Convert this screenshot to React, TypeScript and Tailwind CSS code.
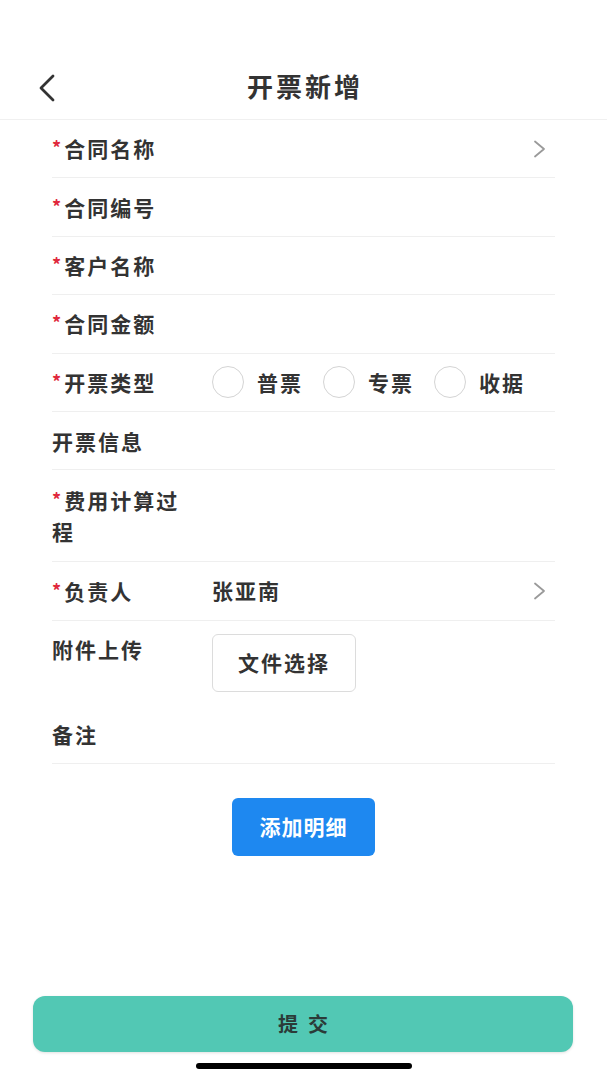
import React from 'react';

const FONT = '"Noto Sans CJK SC", "Noto Sans", sans-serif';

function ChevronRight() {
  return (
    <svg width="14" height="18" viewBox="0 0 14 18" fill="none" className="ml-auto mr-[8px]">
      <path d="M2 1.5 L11 9 L2 16.5" stroke="#9a9a9a" strokeWidth="1.8" strokeLinecap="round" strokeLinejoin="round" />
    </svg>
  );
}

function Radio({ label }: { label: string }) {
  return (
    <div className="flex items-center">
      <div className="w-[32px] h-[32px] rounded-full border-[1.5px] border-[#d4d4d4] bg-white" />
      <span className="ml-[13px] mr-[20px]">{label}</span>
    </div>
  );
}

interface RowProps {
  label: string;
  required?: boolean;
  children?: React.ReactNode;
  arrow?: boolean;
  border?: boolean;
  className?: string;
  top?: boolean;
}

function Row({ label, required, children, arrow, border = true, className = 'h-[58.4px]', top }: RowProps) {
  return (
    <div className={`flex ${top ? 'items-start' : 'items-center'} ${border ? 'border-b border-[#efefef]' : ''} ${className}`}>
      <div className="w-[160px] shrink-0">
        <div className="w-[136px] leading-[30px]">
          {required && (
            <span className="text-[#e0283c] text-[18px] tracking-normal mr-[3px] relative -top-[2px]">*</span>
          )}
          {label}
        </div>
      </div>
      {children}
      {arrow && <ChevronRight />}
    </div>
  );
}

export default function App() {
  return (
    <div
      className="w-[607px] h-[1080px] bg-white relative overflow-hidden text-[#333333]"
      style={{ fontFamily: FONT }}
    >
      {/* header */}
      <div className="h-[120px] border-b border-[#f0f0f0] flex items-end pb-[13px] relative">
        <svg width="22" height="28" viewBox="0 0 22 28" fill="none" className="absolute left-[36px] top-[74px]">
          <path d="M17 2 L5 14 L17 26" stroke="#333" strokeWidth="2.8" strokeLinecap="round" strokeLinejoin="round" />
        </svg>
        <div className="w-full text-center text-[26px] font-semibold tracking-[3px] pl-[3px] leading-[40px] text-[#333]">开票新增</div>
      </div>

      {/* form */}
      <div className="mx-[52px] text-[21px] font-semibold tracking-[2px]">
        <Row label="合同名称" required arrow />
        <Row label="合同编号" required />
        <Row label="客户名称" required />
        <Row label="合同金额" required />
        <Row label="开票类型" required>
          <div className="flex items-center">
            <Radio label="普票" />
            <Radio label="专票" />
            <Radio label="收据" />
          </div>
        </Row>
        <Row label="开票信息" />
        <Row label="费用计算过程" required className="py-[15px]" top />
        <Row label="负责人" required arrow>
          <span>张亚南</span>
        </Row>
        <Row label="附件上传" border={false} className="pt-[13px] pb-[14px]" top>
          <button className="w-[144px] h-[58px] border border-[#dcdcdc] rounded-[6px] bg-white flex items-center justify-center text-[21px] tracking-[2px] font-semibold text-[#333]">
            文件选择
          </button>
        </Row>
        <Row label="备注" />
      </div>

      <div className="flex justify-center mt-[34px]">
        <button className="w-[143px] h-[58px] rounded-[6px] bg-[#1e88f0] text-white text-[21px] font-semibold tracking-[1px]">
          添加明细
        </button>
      </div>

      {/* footer */}
      <div className="absolute left-[33px] right-[34px] top-[996px] h-[56px] rounded-[12px] bg-[#52c8b4] shadow-[0_1px_3px_rgba(0,0,0,0.12)] flex items-center justify-center text-[20px] font-semibold text-[#2b3b38] tracking-[10px] pl-[10px]">
        提交
      </div>
      <div className="absolute left-[196px] top-[1063px] w-[216px] h-[6px] rounded-full bg-black" />
    </div>
  );
}
